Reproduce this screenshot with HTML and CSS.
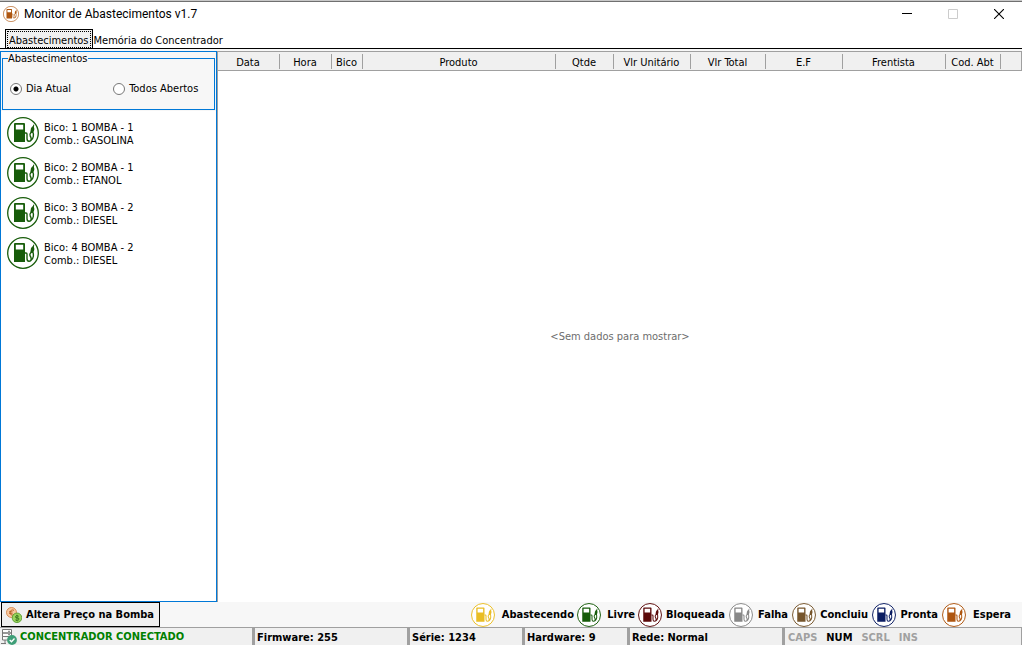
FILE: index.html
```html
<!DOCTYPE html>
<html lang="pt-BR">
<head>
<meta charset="utf-8">
<title>Monitor de Abastecimentos v1.7</title>
<link rel="stylesheet" href="styles.css">
</head>
<body>
<svg class="defs" aria-hidden="true">
  <symbol id="pump" viewBox="0 0 32 32">
    <circle cx="16" cy="16" r="15.3" fill="#fff" stroke="currentColor" stroke-width="1.3"/>
    <path fill="currentColor" fill-rule="evenodd" d="M8 6h9q1 0 1 1v18H7V7q0-1 1-1zm.8 1.800v4.800h7.400V7.800z"/>
    <path fill="none" stroke="currentColor" stroke-width="1.400" d="M18 16h1q1 0 1 1v4.500q0 2.800 2 2.800 2.200 0 2.200-2.300 0-1.500-1-3t.6-3.300L25 14.500M25.500 14q1.200 2.500.8 5.500t-2.800 4.500"/>
    <path fill="currentColor" d="M26.300 7.500l.9.500-.3 2q.9 2 .1 4l-1.800 2-1.800-1 .5-3.400q.7-2 2.100-2.500z"/>
  </symbol>
</svg>
<div class="window">
  <header class="titlebar">
    <svg class="app-icon c-orange"><use href="#pump"/></svg>
    <h1 class="title">Monitor de Abastecimentos v1.7</h1>
    <div class="controls">
      <button class="control" type="button" aria-label="Minimizar"><svg width="10" height="10"><path d="M0 4.500h10" stroke="#000"/></svg></button>
      <button class="control" type="button" aria-label="Maximizar" disabled><svg width="10" height="10"><path d="M.5.5h9v9h-9z" fill="none" stroke="#ccc"/></svg></button>
      <button class="control" type="button" aria-label="Fechar"><svg width="10" height="10"><path d="M0 0l10 10M10 0L0 10" stroke="#000" stroke-width="1.100"/></svg></button>
    </div>
  </header>
  <nav class="tabs" role="tablist">
    <button class="tab tab-active" type="button" role="tab" aria-selected="true"><span class="tab-focus">Abastecimentos</span></button>
    <button class="tab" type="button" role="tab" aria-selected="false">Memória do Concentrador</button>
  </nav>
  <main class="main">
    <aside class="side">
      <div class="filter">
        <fieldset class="group">
          <legend class="legend">Abastecimentos</legend>
          <label class="option"><input class="radio" type="radio" name="filtro" checked>Dia Atual</label>
          <label class="option"><input class="radio" type="radio" name="filtro">Todos Abertos</label>
        </fieldset>
      </div>
      <ul class="pumps">
        <li class="pump"><svg class="pump-icon c-green"><use href="#pump"/></svg><span class="pump-text">Bico: 1 BOMBA - 1<br>Comb.: GASOLINA</span></li>
        <li class="pump"><svg class="pump-icon c-green"><use href="#pump"/></svg><span class="pump-text">Bico: 2 BOMBA - 1<br>Comb.: ETANOL</span></li>
        <li class="pump"><svg class="pump-icon c-green"><use href="#pump"/></svg><span class="pump-text">Bico: 3 BOMBA - 2<br>Comb.: DIESEL</span></li>
        <li class="pump"><svg class="pump-icon c-green"><use href="#pump"/></svg><span class="pump-text">Bico: 4 BOMBA - 2<br>Comb.: DIESEL</span></li>
      </ul>
    </aside>
    <section class="content">
      <table class="grid">
        <colgroup>
          <col class="w-data"><col class="w-hora"><col class="w-bico"><col class="w-produto"><col class="w-qtde"><col class="w-unit"><col class="w-total"><col class="w-ef"><col class="w-frentista"><col class="w-cod"><col>
        </colgroup>
        <thead>
          <tr><th>Data</th><th>Hora</th><th>Bico</th><th>Produto</th><th>Qtde</th><th>Vlr Unitário</th><th>Vlr Total</th><th>E.F</th><th>Frentista</th><th>Cod. Abt</th><td></td></tr>
        </thead>
      </table>
      <p class="empty">&lt;Sem dados para mostrar&gt;</p>
    </section>
  </main>
  <div class="actions">
    <button class="price" type="button">
      <svg class="coins" viewBox="0 0 16 16">
        <circle cx="5.500" cy="5.500" r="5" fill="#f8c9a0" stroke="#d07a3a" stroke-width=".8"/>
        <path d="M8 3.300Q4.500 2 4.200 5.500T8 7.700M3 4.800h3.500M3 6.300h3.500" fill="none" stroke="#b65a1e" stroke-width=".9"/>
        <circle cx="11" cy="10.800" r="4.800" fill="#9ad45c" stroke="#4f9428" stroke-width=".8"/>
        <path d="M12.800 9.300q-3-1.500-3.300.200t1.800 1.400 1.500 1.800-3.400.2M11 7.800v6" fill="none" stroke="#286512" stroke-width=".8"/>
      </svg>
      Altera Preço na Bomba
    </button>
    <ul class="states">
      <li class="state s-abastecendo"><svg class="state-icon c-yellow"><use href="#pump"/></svg>Abastecendo</li>
      <li class="state s-livre"><svg class="state-icon c-green"><use href="#pump"/></svg>Livre</li>
      <li class="state s-bloqueada"><svg class="state-icon c-red"><use href="#pump"/></svg>Bloqueada</li>
      <li class="state s-falha"><svg class="state-icon c-gray"><use href="#pump"/></svg>Falha</li>
      <li class="state s-concluiu"><svg class="state-icon c-brown"><use href="#pump"/></svg>Concluiu</li>
      <li class="state s-pronta"><svg class="state-icon c-navy"><use href="#pump"/></svg>Pronta</li>
      <li class="state s-espera"><svg class="state-icon c-orange"><use href="#pump"/></svg>Espera</li>
    </ul>
  </div>
  <footer class="status">
    <div class="cell cell-conn">
      <svg class="server" viewBox="0 0 16 16">
        <path d="M1.500.5h9v3.500h-9zM1.500 4h9v3.500h-9zM1.500 7.500h5M1.500 7.500v3.500h5M4 11v3M0 14.500h5" fill="#fff" stroke="#777"/>
        <path d="M7 2.300h2M7 5.700h2" stroke="#777"/>
        <circle cx="11" cy="11" r="4.900" fill="#3f9f78"/>
        <path d="M8.700 11l1.800 1.800 3-3.300" fill="none" stroke="#fff" stroke-width="1.300"/>
      </svg>
      CONCENTRADOR CONECTADO
    </div>
    <div class="cell cell-firmware">Firmware: 255</div>
    <div class="cell cell-serie">Série: 1234</div>
    <div class="cell cell-hardware">Hardware: 9</div>
    <div class="cell cell-rede">Rede: Normal</div>
    <div class="cell cell-keys"><span class="key">CAPS</span><span class="key key-on">NUM</span><span class="key">SCRL</span><span class="key">INS</span></div>
  </footer>
</div>
</body>
</html>
```

FILE: styles.css
```css
* { box-sizing: border-box; }
body { margin: 0; font: 11px/13px "DejaVu Sans Condensed", "Noto Sans", sans-serif; color: #000; background: #fff; }
button { font: inherit; color: inherit; }
ul { list-style: none; margin: 0; padding: 0; }
.defs { display: none; }
.c-green { color: #175c0a; }
.c-yellow { color: #e9bd25; }
.c-red { color: #5c0b0b; }
.c-gray { color: #888; }
.c-brown { color: #76552c; }
.c-navy { color: #0b1d62; }
.c-orange { color: #ae5610; }

.window { min-height: 100vh; display: flex; flex-direction: column; border-top: 1px solid #c8c8c8; }
.titlebar { display: flex; align-items: center; height: 28px; border-top: 1px solid #707070; padding: 0 0 3px 3px; gap: 5px; }
.app-icon { width: 16px; height: 16px; }
.title { margin: 0; font: 12px/16px Roboto, "Noto Sans", sans-serif; }
.controls { margin-left: auto; display: flex; align-self: stretch; }
.control { width: 46px; padding: 0; border: 0; background: none; display: flex; align-items: center; justify-content: center; }

.tabs { display: flex; height: 20px; padding-left: 5px; border-bottom: 1px solid #000; }
.tab { border: 0; background: none; padding: 3px 1px 0; white-space: nowrap; }
.tab-active { border: 1px solid #000; border-bottom: 0; background: #f0f0f0; padding: 1px; }
.tab-focus { display: block; border: 1px dotted #000; padding: 2px 1px 0; }

.main { flex: 1; display: flex; padding-top: 2px; background: #f7f7f7; }
.side { width: 217px; flex: none; border: 1px solid #0078d7; background: #fff; }
.filter { background: #f7f7f7; padding: 0 1px 1px; }
.group { margin: 0; min-width: 0; height: 58px; border: 1px solid #0078d7; padding: 17px 7px 0; display: flex; gap: 42px; }
.legend { padding: 0; margin-left: -2px; }
.option { display: flex; align-items: center; gap: 4px; height: 13px; white-space: nowrap; }
.radio { appearance: none; width: 12px; height: 12px; margin: 0; border: 1px solid #777; border-radius: 50%; background: #fff; }
.radio:checked { background: radial-gradient(circle, #000 2px, #fff 3px); }
.pumps { padding: 6px; display: grid; gap: 8px; }
.pump { display: flex; align-items: center; gap: 5px; height: 32px; }
.pump-icon { width: 32px; height: 32px; flex: none; }
.pump-text { padding-top: 2px; }

.content { flex: 1; display: flex; flex-direction: column; background: #fff; border-left: 1px solid #a0a0a0; min-width: 0; }
.grid { width: 100%; table-layout: fixed; border-collapse: separate; border-spacing: 0; background: #f0f0f0; border: 1px solid #a0a0a0; border-left: 0; }
.grid th, .grid td { height: 18px; padding: 2px 2px 0 0; font-weight: normal; text-align: center; white-space: nowrap; }
.grid th { background: linear-gradient(#a0a0a0, #a0a0a0) right center / 1px 15px no-repeat; }
.w-data { width: 62px; }
.w-hora { width: 52px; }
.w-bico { width: 31px; }
.w-produto { width: 193px; }
.w-qtde { width: 58px; }
.w-unit { width: 77px; }
.w-total { width: 75px; }
.w-ef { width: 77px; }
.w-frentista { width: 103px; }
.w-cod { width: 55px; }
.empty { flex: 1; margin: 0; display: flex; align-items: center; justify-content: center; color: #6d6d6d; }

.actions { display: flex; align-items: center; justify-content: space-between; height: 25px; padding: 0 11px 0 1px; background: #f7f7f7; font-weight: bold; }
.price { display: flex; align-items: center; gap: 4px; height: 25px; padding: 0 5px 0 4px; border: 1px solid #000; background: #f0f0f0; font-weight: bold; white-space: nowrap; }
.coins { width: 16px; height: 16px; }
.states { display: flex; }
.state { display: flex; align-items: center; justify-content: space-between; white-space: nowrap; }
.state-icon { width: 24px; height: 24px; flex: none; }
.s-abastecendo { width: 103px; margin-right: 3px; }
.s-livre { width: 58px; margin-right: 3px; }
.s-bloqueada { width: 87px; margin-right: 4px; }
.s-falha { width: 59px; margin-right: 4px; }
.s-concluiu { width: 76px; margin-right: 4px; }
.s-pronta { width: 66px; margin-right: 4px; }
.s-espera { width: 69px; }

.status { display: flex; height: 18px; border-top: 1px solid #a0a0a0; background: #f0f0f0; font-weight: bold; line-height: 19px; }
.cell { white-space: nowrap; border-left: 3px solid #a0a0a0; padding-left: 2px; overflow: hidden; }
.cell-conn { width: 252px; border-left: 0; color: #008000; display: flex; align-items: center; gap: 3px; padding-left: 1px; }
.server { width: 16px; height: 16px; flex: none; }
.cell-firmware { width: 155px; }
.cell-serie { width: 115px; }
.cell-hardware { width: 105px; }
.cell-rede { width: 155px; }
.cell-keys { flex: 1; display: flex; gap: 9px; padding-left: 3px; border-right: 1px solid #a0a0a0; }
.key { color: #a0a0a0; }
.key-on { color: #000; }
```
